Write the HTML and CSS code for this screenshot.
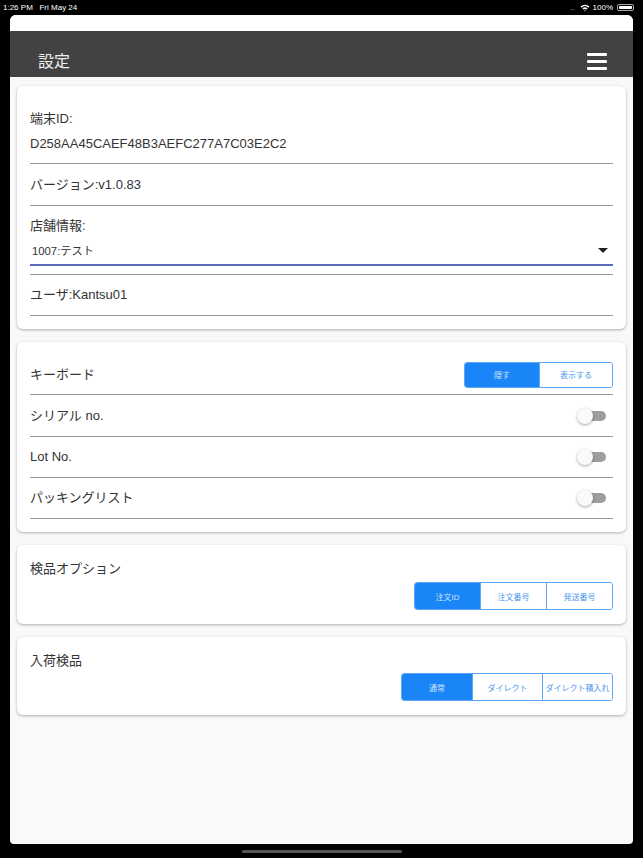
FILE: index.html
```html
<!DOCTYPE html>
<html lang="ja">
<head>
    <meta charset="UTF-8">
    <meta name="viewport" content="width=device-width, initial-scale=1.0">
    <title>設定</title>
    <link rel="stylesheet" href="styles.css">
</head>
<body>

    <!-- ステータスバー -->
    <div class="status-bar">
        <span>1:26 PM&nbsp;&nbsp;&nbsp;Fri May 24</span>
        <span class="status-right">
            <span class="dots">....</span>
            <svg width="10" height="8" viewBox="0 0 10 8">
                <path d="M0.5 2.6 A6.5 6.5 0 0 1 9.5 2.6 L8.4 3.7 A5 5 0 0 0 1.6 3.7 Z" fill="#fff"/>
                <path d="M2.4 4.5 A3.9 3.9 0 0 1 7.6 4.5 L6.5 5.6 A2.4 2.4 0 0 0 3.5 5.6 Z" fill="#fff"/>
                <path d="M4.3 6.4 A1 1 0 0 1 5.7 6.4 L5 7.4 Z" fill="#fff"/>
            </svg>
            <span>100%</span>
            <span class="battery"><span class="battery-fill"></span></span>
        </span>
    </div>

    <div class="sheet">
        <div class="top-strip"></div>

        <!-- ヘッダー -->
        <div class="header">
            <span class="title">設定</span>
            <span class="menu-icon"><i></i><i></i><i></i></span>
        </div>

        <div class="content">
            <!-- 端末情報 -->
            <div class="card">
                <div class="row row-id">
                    <div class="label">端末ID:</div>
                    <div class="value">D258AA45CAEF48B3AEFC277A7C03E2C2</div>
                </div>
                <div class="row">
                    <div class="label">バージョン:v1.0.83</div>
                </div>
                <div class="row row-store">
                    <div class="label">店舗情報:</div>
                    <div class="select">
                        <span>1007:テスト</span>
                        <span class="caret"></span>
                    </div>
                </div>
                <div class="row row-user">
                    <div class="label">ユーザ:Kantsu01</div>
                </div>
            </div>

            <!-- キーボード設定 -->
            <div class="card">
                <div class="row row-keyboard">
                    <div class="label">キーボード</div>
                    <div class="segment">
                        <span class="seg active" style="width: 74px">隠す</span>
                        <span class="seg" style="width: 73px">表示する</span>
                    </div>
                </div>
                <div class="row row-toggle">
                    <div class="label">シリアル no.</div>
                    <span class="toggle"></span>
                </div>
                <div class="row row-toggle">
                    <div class="label">Lot No.</div>
                    <span class="toggle"></span>
                </div>
                <div class="row row-toggle">
                    <div class="label">パッキングリスト</div>
                    <span class="toggle"></span>
                </div>
            </div>

            <!-- 検品オプション -->
            <div class="card card-option">
                <div class="option-title">検品オプション</div>
                <div class="segment tall">
                    <span class="seg active" style="width: 65px">注文ID</span>
                    <span class="seg" style="width: 66px">注文番号</span>
                    <span class="seg" style="width: 66px">発送番号</span>
                </div>
            </div>

            <!-- 入荷検品 -->
            <div class="card card-option">
                <div class="option-title">入荷検品</div>
                <div class="segment tall">
                    <span class="seg active" style="width: 70px">通常</span>
                    <span class="seg" style="width: 70px">ダイレクト</span>
                    <span class="seg" style="width: 70px">ダイレクト積入れ</span>
                </div>
            </div>
        </div>
    </div>

    <div class="home-bar"></div>

</body>
</html>
```

FILE: styles.css
```css
body {
    margin: 0;
    padding: 0;
    background-color: #000;
    font-family: "Liberation Sans", "Noto Sans CJK JP", sans-serif;
    color: #333;
    height: 858px;
    overflow: hidden;
}

/* ステータスバー */
.status-bar {
    height: 15px;
    padding: 0 9px 0 3px;
    display: flex;
    justify-content: space-between;
    align-items: center;
    color: #fff;
    font-size: 8px;
}

.status-right {
    display: flex;
    align-items: center;
    gap: 3px;
}

.dots {
    color: #777;
    letter-spacing: -1px;
    margin-right: 2px;
}

.battery {
    width: 17px;
    height: 7px;
    border: 1px solid #aaa;
    border-radius: 2px;
    box-sizing: border-box;
    padding: 1px;
    margin-left: 1px;
}

.battery-fill {
    display: block;
    height: 100%;
    background-color: #fff;
    border-radius: 1px;
}

/* シート */
.sheet {
    margin: 0 10px;
    height: 829px;
    background-color: #f9f9f9;
    border-radius: 6px 6px 4px 4px;
    overflow: hidden;
}

.top-strip {
    height: 16px;
    background-color: #fff;
}

.header {
    height: 46px;
    background-color: #424242;
    display: flex;
    justify-content: space-between;
    align-items: flex-end;
    padding: 0 26px 7px 28px;
    box-sizing: border-box;
}

.title {
    color: #eee;
    font-size: 16px;
    line-height: 18px;
    height: 18px;
    margin-bottom: -1px;
}

.menu-icon {
    display: flex;
    flex-direction: column;
    gap: 4px;
    width: 20px;
}

.menu-icon i {
    display: block;
    height: 3px;
    background-color: #fff;
    border-radius: 1px;
}

/* 内容 */
.content {
    padding: 9px 7px;
    display: flex;
    flex-direction: column;
    gap: 13px;
}

.card {
    background-color: #fff;
    border-radius: 6px;
    padding: 13px 13px;
    box-shadow: 0 1px 3px rgba(0, 0, 0, 0.3);
}

.row {
    border-bottom: 1px solid #999;
    padding: 11px 0 10px;
}

.label,
.value {
    font-size: 13px;
    line-height: 20px;
    height: 20px;
    white-space: nowrap;
}

.row-id {
    padding: 10px 0 9px;
}

.value {
    margin-top: 5px;
}

.row-store {
    padding: 10px 0 8px;
}

.row-user {
    padding: 10px 0;
}

.select {
    height: 30px;
    display: flex;
    justify-content: space-between;
    align-items: center;
    padding: 0 5px 0 2px;
    border-bottom: 2px solid #5c6bc0;
    box-sizing: border-box;
    font-size: 11.3px;
}

.caret {
    width: 0;
    height: 0;
    border-left: 5px solid transparent;
    border-right: 5px solid transparent;
    border-top: 5px solid #222;
}

.row-keyboard {
    height: 40px;
    padding: 0;
    box-sizing: border-box;
    display: flex;
    justify-content: space-between;
    align-items: center;
}

.row-toggle {
    height: 41px;
    padding: 0;
    box-sizing: border-box;
    display: flex;
    justify-content: space-between;
    align-items: center;
}

.row-keyboard + .row-toggle {
    height: 42px;
}

.toggle {
    position: relative;
    width: 27px;
    height: 10px;
    border-radius: 5px;
    background-color: #9e9e9e;
    margin-right: 7px;
}

.toggle::before {
    content: "";
    position: absolute;
    left: -2px;
    top: -3px;
    width: 16px;
    height: 16px;
    border-radius: 50%;
    background-color: #fafafa;
    box-shadow: 0 1px 3px rgba(0, 0, 0, 0.35);
}

/* セグメントボタン */
.segment {
    display: flex;
    height: 26px;
    border: 1px solid #5ea6f7;
    border-radius: 3px;
    overflow: hidden;
    box-sizing: border-box;
}

.segment.tall {
    height: 28px;
}

.seg {
    display: flex;
    align-items: center;
    justify-content: center;
    font-size: 8px;
    white-space: nowrap;
    color: #4b97ee;
    background-color: #fff;
    border-left: 1px solid #5ea6f7;
    box-sizing: border-box;
}

.seg:first-child {
    border-left: none;
}

.seg.active {
    background-color: #1a85f7;
    color: #cfe3fb;
}

.card-option {
    padding: 13px 13px 14px;
    display: flex;
    flex-direction: column;
    align-items: flex-end;
}

.option-title {
    align-self: flex-start;
    font-size: 13px;
    line-height: 22px;
    height: 22px;
    margin-bottom: 2px;
}

.card-option + .card-option .option-title {
    margin-bottom: 1px;
}

.home-bar {
    width: 160px;
    height: 3px;
    border-radius: 2px;
    background-color: #555;
    margin: 6px auto 0;
}
```
